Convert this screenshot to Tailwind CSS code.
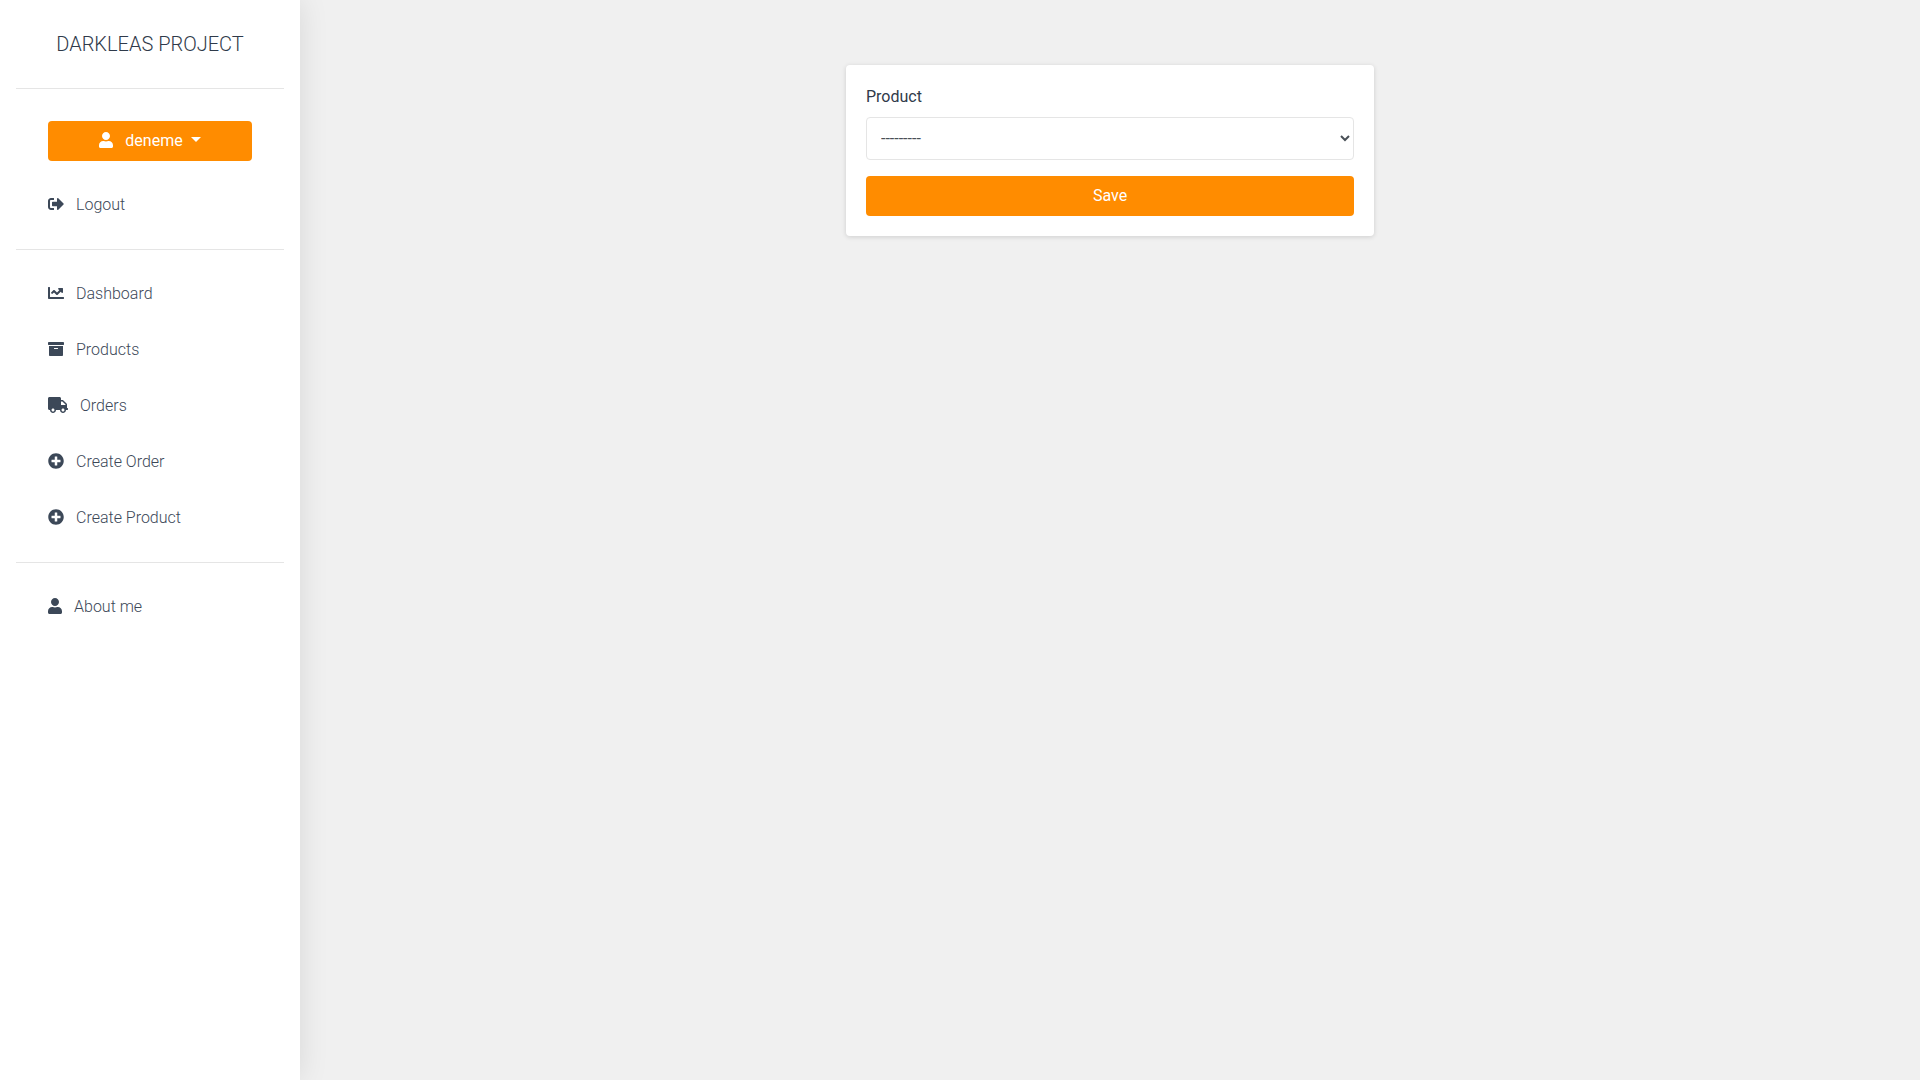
<!DOCTYPE html>
<html lang="en">
<head>
    <meta charset="UTF-8">
    <meta name="viewport" content="width=device-width, initial-scale=1.0">
    <title>Darkleas Project</title>
    <script src="https://cdn.jsdelivr.net/npm/@tailwindcss/browser@4"></script>
</head>
<body class="bg-[#f0f0f0] font-['Roboto',sans-serif] text-[#212529]">
    <div class="flex min-h-screen">
        <!-- Sidebar -->
        <aside class="w-[300px] shrink-0 bg-white px-4 shadow-[0_0_28px_rgba(0,0,0,0.1)]">
            <div class="h-[88px] flex items-center justify-center text-[20px] font-light text-[#2f3a4a]">DARKLEAS PROJECT</div>
            <hr class="border-[#e5e5e5]">

            <div class="px-8 pt-8">
                <button class="w-full h-10 flex items-center justify-center bg-[#ff8c00] text-white rounded text-base">
                    <svg class="w-[14px] h-4 mr-3 mb-[2px] fill-current" viewBox="0 0 448 512"><path d="M224 256c70.7 0 128-57.3 128-128S294.7 0 224 0 96 57.3 96 128s57.3 128 128 128zm89.6 32h-16.7c-22.2 10.2-46.9 16-72.9 16s-50.6-5.8-72.9-16h-16.7C60.2 288 0 348.2 0 422.4V464c0 26.5 21.5 48 48 48h352c26.5 0 48-21.5 48-48v-41.6c0-74.2-60.2-134.4-134.4-134.4z"/></svg>
                    deneme
                    <span class="ml-2 mb-1 border-t-[5px] border-x-[5px] border-x-transparent border-t-white"></span>
                </button>
            </div>
            <a class="h-14 px-8 mt-4 flex items-center gap-3 text-base font-light text-[#3c4858]">
                <svg class="w-4 h-4 mb-[2px] fill-[#3c4858]" viewBox="0 0 512 512"><path d="M497 273L329 441c-15 15-41 4.5-41-17v-96H152c-13.3 0-24-10.7-24-24v-96c0-13.3 10.7-24 24-24h136V88c0-21.4 25.9-32 41-17l168 168c9.3 9.4 9.3 24.6 0 34zM192 436v-40c0-6.6-5.4-12-12-12H96c-17.7 0-32-14.3-32-32V160c0-17.7 14.3-32 32-32h84c6.6 0 12-5.4 12-12V76c0-6.6-5.4-12-12-12H96c-53 0-96 43-96 96v192c0 53 43 96 96 96h84c6.6 0 12-5.4 12-12z"/></svg>
                Logout
            </a>
            <hr class="border-[#e5e5e5] mt-4">

            <nav class="pt-4 pb-4">
                <a class="h-14 px-8 flex items-center gap-3 text-base font-light text-[#3c4858]">
                    <svg class="w-4 h-4 mb-[2px] fill-[#3c4858]" viewBox="0 0 512 512"><path d="M496 384H64V80c0-8.84-7.16-16-16-16H16C7.16 64 0 71.16 0 80v336c0 17.67 14.33 32 32 32h464c8.84 0 16-7.16 16-16v-32c0-8.84-7.16-16-16-16zM464 96H345.94c-21.38 0-32.09 25.85-16.97 40.97l32.4 32.4L288 242.75l-73.37-73.37c-12.5-12.5-32.76-12.5-45.25 0l-68.69 68.69c-6.25 6.25-6.25 16.38 0 22.63l22.62 22.62c6.25 6.25 16.38 6.25 22.63 0L192 237.25l73.37 73.37c12.5 12.5 32.76 12.5 45.25 0l96-96 32.4 32.4c15.12 15.12 40.97 4.41 40.97-16.97V112c.01-8.84-7.15-16-15.99-16z"/></svg>
                    Dashboard
                </a>
                <a class="h-14 px-8 flex items-center gap-3 text-base font-light text-[#3c4858]">
                    <svg class="w-4 h-4 mb-[2px] fill-[#3c4858]" viewBox="0 0 512 512"><path d="M32 448c0 17.7 14.3 32 32 32h384c17.7 0 32-14.3 32-32V160H32v288zm160-212c0-6.6 5.4-12 12-12h104c6.6 0 12 5.4 12 12v8c0 6.6-5.4 12-12 12H204c-6.6 0-12-5.4-12-12v-8zM480 32H32C14.3 32 0 46.3 0 64v48c0 8.8 7.2 16 16 16h480c8.8 0 16-7.2 16-16V64c0-17.7-14.3-32-32-32z"/></svg>
                    Products
                </a>
                <a class="h-14 px-8 flex items-center gap-3 text-base font-light text-[#3c4858]">
                    <svg class="w-5 h-4 mb-[2px] fill-[#3c4858]" viewBox="0 0 640 512"><path d="M624 352h-16V243.9c0-12.7-5.1-24.9-14.1-33.9L494 110.1c-9-9-21.2-14.1-33.9-14.1H416V48c0-26.5-21.5-48-48-48H48C21.5 0 0 21.5 0 48v320c0 26.5 21.5 48 48 48h16c0 53 43 96 96 96s96-43 96-96h128c0 53 43 96 96 96s96-43 96-96h48c8.8 0 16-7.2 16-16v-32c0-8.8-7.2-16-16-16zM160 464c-26.5 0-48-21.5-48-48s21.5-48 48-48 48 21.5 48 48-21.5 48-48 48zm320 0c-26.5 0-48-21.5-48-48s21.5-48 48-48 48 21.5 48 48-21.5 48-48 48zm80-208H416V144h44.1l99.9 99.9V256z"/></svg>
                    Orders
                </a>
                <a class="h-14 px-8 flex items-center gap-3 text-base font-light text-[#3c4858]">
                    <svg class="w-4 h-4 mb-[2px] fill-[#3c4858]" viewBox="0 0 512 512"><path d="M256 8C119 8 8 119 8 256s111 248 248 248 248-111 248-248S393 8 256 8zm144 276c0 6.6-5.4 12-12 12h-92v92c0 6.6-5.4 12-12 12h-56c-6.6 0-12-5.4-12-12v-92h-92c-6.6 0-12-5.4-12-12v-56c0-6.6 5.4-12 12-12h92v-92c0-6.6 5.4-12 12-12h56c6.6 0 12 5.4 12 12v92h92c6.6 0 12 5.4 12 12v56z"/></svg>
                    Create Order
                </a>
                <a class="h-14 px-8 flex items-center gap-3 text-base font-light text-[#3c4858]">
                    <svg class="w-4 h-4 mb-[2px] fill-[#3c4858]" viewBox="0 0 512 512"><path d="M256 8C119 8 8 119 8 256s111 248 248 248 248-111 248-248S393 8 256 8zm144 276c0 6.6-5.4 12-12 12h-92v92c0 6.6-5.4 12-12 12h-56c-6.6 0-12-5.4-12-12v-92h-92c-6.6 0-12-5.4-12-12v-56c0-6.6 5.4-12 12-12h92v-92c0-6.6 5.4-12 12-12h56c6.6 0 12 5.4 12 12v92h92c6.6 0 12 5.4 12 12v56z"/></svg>
                    Create Product
                </a>
            </nav>
            <hr class="border-[#e5e5e5]">

            <a class="h-14 px-8 mt-4 flex items-center gap-3 text-base font-light text-[#3c4858]">
                <svg class="w-[14px] h-4 mb-[2px] fill-[#3c4858]" viewBox="0 0 448 512"><path d="M224 256c70.7 0 128-57.3 128-128S294.7 0 224 0 96 57.3 96 128s57.3 128 128 128zm89.6 32h-16.7c-22.2 10.2-46.9 16-72.9 16s-50.6-5.8-72.9-16h-16.7C60.2 288 0 348.2 0 422.4V464c0 26.5 21.5 48 48 48h352c26.5 0 48-21.5 48-48v-41.6c0-74.2-60.2-134.4-134.4-134.4z"/></svg>
                About me
            </a>
        </aside>

        <!-- Main -->
        <main class="flex-1 flex justify-center items-start pt-[65px]">
            <form class="w-[528px] bg-white rounded p-5 shadow-[0_1px_5px_rgba(0,0,0,0.14)]">
                <label class="block text-base leading-6 mb-2 text-[#2f3a4a]">Product</label>
                <select class="w-full h-[43px] pl-[10px] pr-[3px] bg-white border border-[#e5e5e5] rounded text-base text-[#495057]">
                    <option>---------</option>
                </select>
                <button type="button" class="w-full h-10 mt-4 bg-[#ff8c00] text-white rounded text-base">Save</button>
            </form>
        </main>
    </div>
</body>
</html>
